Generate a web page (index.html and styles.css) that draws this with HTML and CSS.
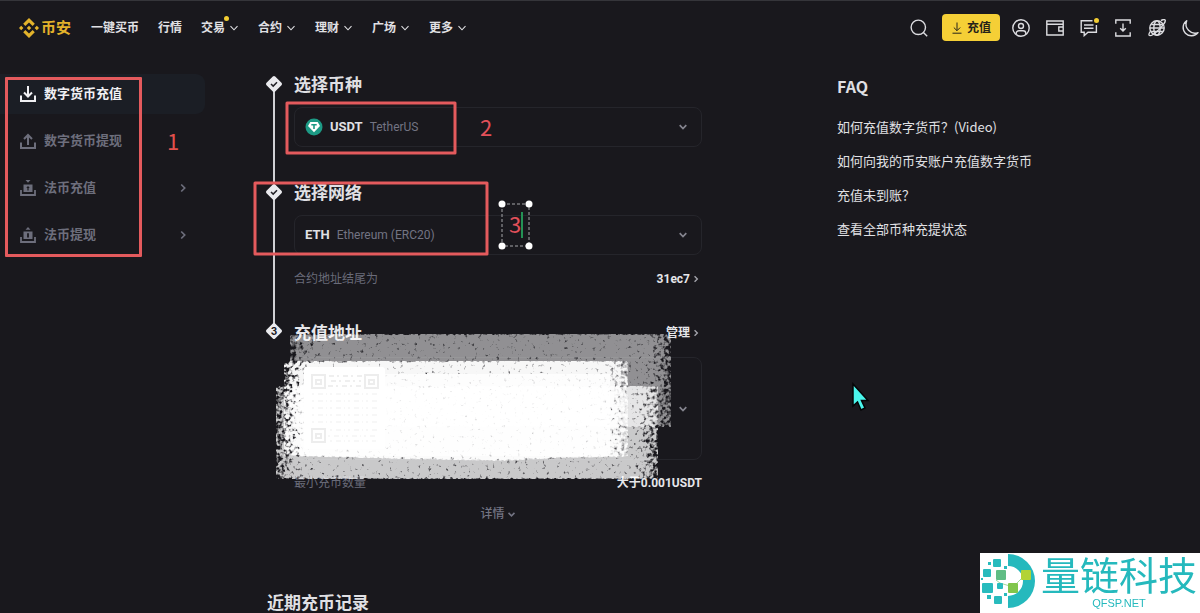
FILE: index.html
```html
<!DOCTYPE html>
<html lang="zh-CN">
<head>
<meta charset="utf-8">
<meta name="viewport" content="width=device-width, initial-scale=1">
<title>数字货币充值</title>
<link rel="stylesheet" href="styles.css">
</head>
<body>
<svg class="defs" aria-hidden="true">
  <symbol id="chev" viewBox="0 0 10 10"><path d="M1.5 3.2 5 6.8l3.500-3.600" fill="none" stroke="currentColor" stroke-width="1.100"/></symbol>
  <symbol id="chev-bold" viewBox="0 0 10 10"><path d="M1.700 3.200 5 6.500l3.300-3.300" fill="none" stroke="currentColor" stroke-width="1.700"/></symbol>
  <symbol id="chev-right" viewBox="0 0 10 10"><path d="M3.200 1.500 6.700 5 3.200 8.500" fill="none" stroke="currentColor" stroke-width="1.700"/></symbol>
  <symbol id="step-done" viewBox="0 0 18 24"><path d="M7.800 4.600a1.700 1.700 0 0 1 2.400 0l6.300 6.200a1.700 1.700 0 0 1 0 2.400l-6.300 6.200a1.700 1.700 0 0 1-2.400 0l-6.300-6.200a1.700 1.700 0 0 1 0-2.400z" transform="translate(0 -1)" fill="#eaeaee"/><path d="m6 11 2.200 2.100 3.800-3.800" fill="none" stroke="#222127" stroke-width="1.500"/></symbol>
</svg>

<header class="header">
  <a class="logo" href="#">
    <svg width="20" height="20" viewBox="0 0 20 20" fill="#e3b32b"><path d="M10 0 15.800 5.800 13.600 8 10 4.400 6.400 8 4.200 5.800zM2.200 7.800 4.400 10 2.200 12.200 0 10zM17.800 7.800 20 10l-2.200 2.200L15.600 10zM10 7.800 12.200 10 10 12.200 7.800 10zM10 20l-5.800-5.800L6.400 12l3.600 3.600 3.600-3.600 2.200 2.200z"/></svg>
    <span>币安</span>
  </a>
  <nav class="nav">
    <a href="#">一键买币</a>
    <a href="#">行情</a>
    <a href="#" class="has-dot">交易<svg><use href="#chev"/></svg></a>
    <a href="#">合约<svg><use href="#chev"/></svg></a>
    <a href="#">理财<svg><use href="#chev"/></svg></a>
    <a href="#">广场<svg><use href="#chev"/></svg></a>
    <a href="#">更多<svg><use href="#chev"/></svg></a>
  </nav>
  <button class="icon search" aria-label="搜索"><svg viewBox="0 0 18 18"><circle cx="8.300" cy="8.300" r="7.200"/><path d="m13.400 13.400 3.800 3.800"/></svg></button>
  <button class="deposit"><svg viewBox="0 0 12 12"><path d="M6 .5v8M2.800 5.500 6 8.700l3.200-3.200M1.500 11.200h9"/></svg>充值</button>
  <div class="tools">
    <button class="icon" aria-label="账户"><svg viewBox="0 0 18 18"><circle cx="9" cy="9" r="8.200"/><circle cx="9" cy="7" r="2.500"/><path d="M4.200 15.200v-.7a2.700 2.700 0 0 1 2.700-2.700h4.200a2.700 2.700 0 0 1 2.700 2.700v.7"/></svg></button>
    <button class="icon" aria-label="钱包"><svg viewBox="0 0 18 18"><path d="M17.200 5.200V2H.8v14h16.400v-3.200M.8 5.200h16.400v7.600M17.200 8h-4.400v4h4.400"/></svg></button>
    <button class="icon has-dot" aria-label="消息"><svg viewBox="0 0 18 18"><path d="M12.500 1.800H1.200v11.400h3v3.400l3.800-3.400h8.400V6M4 6h9.500M4 9.300h9.500"/></svg></button>
    <button class="icon" aria-label="下载"><svg viewBox="0 0 18 18"><path d="M1.800 4.800V1h14.400v3.800M1.800 13.200V17h14.400v-3.800M9 4.500v7.500M6.200 9.300 9 12.100l2.800-2.800"/></svg></button>
    <button class="icon" aria-label="语言"><svg viewBox="0 0 18 18"><circle cx="9" cy="9" r="7.200"/><ellipse cx="9" cy="9" rx="3.200" ry="7.200"/><path d="M2 9h14M3.200 5.500h11.600M3.200 12.500h11.600"/><path d="M13 1.500c2-1 3.600-1.200 4-.6 1 1.200-1.800 5.500-6 9.500s-8.500 7-9.800 5.900c-.6-.6-.1-2 .9-3.800"/></svg></button>
    <button class="icon" aria-label="深色模式"><svg viewBox="0 0 18 18"><path d="M4.700 1.700A8.300 8.300 0 1 0 16 13.600 9 9 0 0 1 4.700 1.700z" stroke-linejoin="round"/></svg></button>
  </div>
</header>

<main class="page">
  <aside class="sidebar">
    <a class="item active" href="#"><svg viewBox="0 0 16 16"><path d="M8 0v10M4 6.500l4 4 4-4M1 9.500V15h14V9.500" fill="none" stroke="currentColor" stroke-width="2"/></svg><span>数字货币充值</span></a>
    <a class="item" href="#"><svg viewBox="0 0 16 16"><path d="M8 12V2.500M4 6l4-4 4 4M1 9.500V15h14V9.500" fill="none" stroke="currentColor" stroke-width="2"/></svg><span>数字货币提现</span></a>
    <a class="item" href="#"><svg viewBox="0 0 16 16"><path d="M1 10v5h14v-5" fill="none" stroke="currentColor" stroke-width="1.800"/><path d="M5.500 0h5L8 2.800zM3.500 4.500h9V12h-9z" fill="currentColor"/><path d="M8 6.200v4.200M6.700 7.500h2.600" stroke="#19181d" stroke-width="1.200"/></svg><span>法币充值</span><svg class="more"><use href="#chev-right"/></svg></a>
    <a class="item" href="#"><svg viewBox="0 0 16 16"><path d="M1 10v5h14v-5" fill="none" stroke="currentColor" stroke-width="1.800"/><path d="M5.500 2.800h5L8 0zM3.500 4.500h9V12h-9z" fill="currentColor"/><path d="M8 6.200v4.200" stroke="#19181d" stroke-width="1.800"/></svg><span>法币提现</span><svg class="more"><use href="#chev-right"/></svg></a>
    <div class="mark mark-side"></div>
    <span class="mark-num">1</span>
  </aside>

  <section class="deposit-flow">
    <ol class="steps">
      <li class="step">
        <div class="rail"><svg><use href="#step-done"/></svg></div>
        <div class="body">
          <h2>选择币种</h2>
          <button class="picker" aria-haspopup="listbox">
            <svg class="coin" viewBox="0 0 18 18"><circle cx="9" cy="9" r="8.500" fill="#1d9a85"/><path d="M5.300 4h7.400L15 8l-6 6.200L3 8z" fill="#fff"/><path d="M6.300 6h5.400v1.500H9.800V11H8.200V7.500H6.300z" fill="#1d9a85"/></svg>
            <strong>USDT</strong><span>TetherUS</span><svg class="arrow"><use href="#chev-bold"/></svg>
          </button>
        </div>
      </li>
      <li class="step">
        <div class="rail"><svg><use href="#step-done"/></svg></div>
        <div class="body">
          <h2>选择网络</h2>
          <button class="picker" aria-haspopup="listbox"><strong>ETH</strong><span>Ethereum (ERC20)</span><svg class="arrow"><use href="#chev-bold"/></svg></button>
          <div class="row contract"><span>合约地址结尾为</span><a href="#">31ec7<svg><use href="#chev-right"/></svg></a></div>
        </div>
      </li>
      <li class="step">
        <div class="rail"><svg viewBox="0 0 18 24"><path d="M7.800 4.600a1.700 1.700 0 0 1 2.400 0l6.300 6.200a1.700 1.700 0 0 1 0 2.400l-6.300 6.200a1.700 1.700 0 0 1-2.400 0l-6.300-6.200a1.700 1.700 0 0 1 0-2.400z" transform="translate(0 -2)" fill="#eaeaee"/><text class="step-num" x="9" y="14" text-anchor="middle">3</text></svg></div>
        <div class="body">
          <div class="row head"><h2>充值地址</h2><a href="#">管理<svg><use href="#chev-right"/></svg></a></div>
          <div class="address"><svg class="arrow"><use href="#chev-bold"/></svg></div>
          <div class="row minimum"><span>最小充币数量</span><b>大于0.001USDT</b></div>
          <button class="details">详情<svg><use href="#chev-bold"/></svg></button>
        </div>
      </li>
    </ol>
    <h2 class="recent">近期充币记录</h2>

    <svg class="overlay" aria-hidden="true">
      <defs>
        <filter id="spray" x="0" y="0" width="1" height="1" color-interpolation-filters="sRGB">
          <feGaussianBlur in="SourceAlpha" stdDeviation="17 1" result="soft"/>
          <feTurbulence type="fractalNoise" baseFrequency="0.28" numOctaves="2" seed="7" result="noise"/>
          <feComposite in="soft" in2="noise" operator="arithmetic" k1="0" k2="0.700" k3="1" k4="-0.760" result="mix"/>
          <feColorMatrix in="mix" type="matrix" values="0 0 0 0 1  0 0 0 0 1  0 0 0 0 1  0 0 0 3.500 0" result="paint"/>
          <feComposite in="paint" in2="SourceAlpha" operator="in"/>
        </filter>
      </defs>
      <g transform="translate(-265 -73)">
        <g opacity=".52"><path filter="url(#spray)" d="M290 334H671V427H290z"/></g>
        <g opacity=".93"><path filter="url(#spray)" d="M284 361H628V457L560 458 500 461 400 459 284 456z"/></g>
        <g opacity=".77"><path filter="url(#spray)" d="M276 386H658V479H276z"/></g>
        <path d="M312 374H610V456H300V386z" fill="#fff" opacity=".7"/>
        <rect x="304" y="367" width="81" height="82" rx="3" fill="#fff"/>
        <g fill="none" stroke="#ededed" stroke-width="2">
          <path d="M312 375h13v13h-13zM365 375h13v13h-13zM312 429h13v13h-13zM316 380h5v4h-5zM369 380h5v4h-5zM316 434h5v4h-5z"/>
          <path d="M329 376h34M331 381h30M328 386h35" stroke-dasharray="5 3 2 4" stroke="#efefef"/>
          <path d="M312 394h66M312 401h66M312 408h66M312 415h66M312 422h66M330 430h48M328 436h50M330 441h46" stroke-dasharray="2 4 5 3 1 3" stroke="#f7f7f7"/>
        </g>
        <g fill="none" stroke="#e45a5d" stroke-width="3" stroke-linejoin="round">
          <path d="M287 103H455V153H287z"/>
          <path d="M255 183H487V254H255z"/>
        </g>
        <text class="num" x="480" y="136">2</text>
        <text class="num" x="509" y="233">3</text>
        <path d="M502 204H529V246H502z" fill="none" stroke="#a5a5a9" stroke-dasharray="3 2"/>
        <path d="M522 212V238" stroke="#249255" stroke-width="2"/>
        <g fill="#fff"><circle cx="502" cy="204" r="3.500"/><circle cx="529" cy="204" r="3.500"/><circle cx="502" cy="246" r="3.500"/><circle cx="529" cy="246" r="3.500"/></g>
      </g>
    </svg>
  </section>

  <section class="faq">
    <h2>FAQ</h2>
    <a href="#">如何充值数字货币？(Video)</a>
    <a href="#">如何向我的币安账户充值数字货币</a>
    <a href="#">充值未到账？</a>
    <a href="#">查看全部币种充提状态</a>
    <svg class="cursor" viewBox="0 0 20 30" aria-hidden="true"><path d="M2 2v22l4.500-4 3.500 8 4-2-3.500-7.500H17z" fill="#4af5ec" stroke="#050507" stroke-width="1.500"/></svg>
  </section>
</main>

<div class="watermark">
  <svg viewBox="0 0 56 60" aria-hidden="true">
    <path d="M28 1a27 27 0 0 1 0 54V43a15 15 0 0 0 0-30z" fill="#25b9bd"/>
    <path d="M16 27 20 30 33 34 46 21" fill="none" stroke="#9edc9b" stroke-width="1"/>
    <g fill="#28bbbd"><rect x="13" y="6" width="8" height="8" rx="1"/><rect x="3" y="16" width="8" height="8" rx="1"/><rect x="2" y="30" width="11" height="10" rx="1"/><rect x="17" y="30" width="6" height="6" rx="1"/><rect x="14" y="43" width="8" height="8" rx="1"/><rect x="7" y="42" width="4" height="4"/><rect x="8" y="9" width="3" height="3"/><rect x="24" y="13" width="3" height="3"/><rect x="1" y="25" width="2" height="2"/><rect x="24" y="40" width="3" height="3"/></g>
    <rect x="16" y="17" width="10" height="10" rx="1" fill="#60bd84"/><rect x="28" y="30" width="10" height="10" rx="1" fill="#80c64b"/><rect x="41" y="17" width="10" height="10" rx="1" fill="#b2d335"/>
  </svg>
  <div class="brand"><span>量链科技</span><small>QFSP.NET</small></div>
</div>
</body>
</html>
```

FILE: styles.css
```css
* { box-sizing: border-box; }
body {
  margin: 0;
  min-height: 100vh;
  background: #19181d;
  color: #e0e0e4;
  font: 500 12px/20px Roboto, "Noto Sans CJK SC", sans-serif;
  position: relative;
  overflow-x: hidden;
}
a { color: inherit; text-decoration: none; }
button { font: inherit; color: inherit; background: none; border: 0; padding: 0; cursor: pointer; }
h2, ol { margin: 0; padding: 0; }
h2 { font-size: 17px; line-height: 24px; font-weight: 600; }
.defs { position: absolute; width: 0; height: 0; }

.header {
  display: flex;
  align-items: center;
  height: 54px;
  padding-left: 19px;
  border-top: 1px solid #35353a;
}
.logo { display: flex; align-items: center; gap: 2px; color: #e3b32b; font-size: 15px; font-weight: 700; margin-right: 20px; }
.nav { display: flex; gap: 19px; margin-right: auto; font-weight: 600; }
.nav a { display: flex; align-items: center; gap: 4px; white-space: nowrap; }
.nav svg { width: 10px; height: 10px; }
.has-dot { position: relative; }
.has-dot::after { content: ""; position: absolute; width: 5px; height: 5px; border-radius: 50%; background: #f3cd32; }
.nav .has-dot::after { top: -2px; left: 23px; }
.icon.has-dot::after { top: -1px; right: -1px; }
.icon { width: 18px; height: 18px; }
.icon svg { display: block; width: 18px; height: 18px; fill: none; stroke: #dcdce0; stroke-width: 1.4; }
.search { margin-right: 14px; }
.deposit {
  display: flex;
  align-items: center;
  justify-content: center;
  gap: 4px;
  width: 58px;
  height: 27px;
  margin-right: 12px;
  border-radius: 4px;
  background: #f5cf36;
  color: #26231a;
  font-weight: 600;
}
.deposit svg { width: 12px; height: 12px; fill: none; stroke: currentColor; }
.tools { display: flex; gap: 16px; }

.page { display: grid; grid-template-columns: 205fr 497fr 498fr; }
.sidebar { position: relative; display: flex; flex-direction: column; gap: 7px; padding-top: 20px; }
.item {
  display: flex;
  align-items: center;
  gap: 8px;
  height: 40px;
  padding: 0 17px 0 20px;
  border-radius: 0 9px 9px 0;
  color: #6d6e7c;
  font-size: 13px;
  font-weight: 600;
}
.item svg { width: 16px; height: 16px; }
.item .more { width: 10px; height: 10px; margin-left: auto; }
.active { background: #1b1e25; color: #f0f0f3; }
.mark { position: absolute; border: 3px solid #e45a5d; border-radius: 1px; }
.mark-side { top: 23px; left: 5px; width: 137px; height: 180px; }
.mark-num { position: absolute; top: 76px; left: 167px; color: #e2504c; font: 400 22px/20px "Noto Sans CJK SC", sans-serif; }

.deposit-flow { position: relative; margin: 19px 0 0 60px; }
.steps { list-style: none; }
.step { display: grid; grid-template-columns: 18px 1fr; gap: 11px; }
.rail { position: relative; }
.rail svg { position: relative; display: block; width: 18px; height: 24px; }
.step:not(:last-child) .rail::before { content: ""; position: absolute; top: 12px; bottom: -12px; left: 8px; width: 2px; background: #d0d0d4; }
.step-num { font: 700 10px Inter, sans-serif; fill: #19181d; }
.body { padding-bottom: 34px; }
.step:nth-child(2) .body { padding-bottom: 32px; }
.step:last-child .body { padding-bottom: 0; }
.picker {
  display: flex;
  align-items: center;
  gap: 7px;
  width: 100%;
  height: 40px;
  margin-top: 10px;
  padding: 0 13px 0 10px;
  border: 1px solid #25252b;
  border-radius: 8px;
}
.picker strong { font-size: 13px; font-weight: 700; }
.picker span { color: #737483; font-weight: 400; }
.coin { width: 18px; height: 18px; }
.arrow { width: 10px; height: 10px; margin-left: auto; color: #85858f; }
.row { display: flex; justify-content: space-between; color: #696b79; }
.row a { display: flex; align-items: center; gap: 2px; padding-right: 2px; color: #e6e6ea; font-weight: 700; }
.row a svg { width: 8px; height: 8px; color: #a5a5ad; }
.row span { font-weight: 400; }
.contract { margin-top: 14px; }
.head h2 { color: #e6e6ea; }
.address {
  display: flex;
  align-items: center;
  height: 103px;
  margin-top: 12px;
  padding-right: 13px;
  border: 1px solid #25252b;
  border-radius: 8px;
}
.minimum { margin-top: 13px; }
.minimum b { color: #e6e6ea; font-weight: 700; }
.details { display: flex; align-items: center; gap: 2px; margin: 11px auto 0; color: #737483; }
.details svg { width: 9px; height: 9px; }
.recent { margin-top: 69px; padding-left: 2px; line-height: 20px; }
.overlay { position: absolute; top: 0; left: 0; width: 100%; height: 100%; overflow: visible; pointer-events: none; }
.num { font: 400 22px "Noto Sans CJK SC", sans-serif; fill: #e2505a; }

.faq { position: relative; display: flex; flex-direction: column; align-items: flex-start; gap: 14px; padding: 20px 0 0 135px; font: 400 13px/20px "Noto Sans CJK SC", sans-serif; }
.faq h2 { margin-bottom: 5px; font-size: 16px; font-weight: 700; }
.cursor { position: absolute; top: 328px; left: 149px; width: 20px; height: 30px; }

.watermark { position: fixed; right: 0; bottom: 0; display: flex; gap: 5px; width: 220px; height: 60px; background: #fff; color: #25b9bd; }
.watermark svg { width: 56px; height: 60px; flex: none; }
.brand { display: flex; flex-direction: column; align-items: center; white-space: nowrap; }
.brand span { font: 400 39px/40px "Noto Sans CJK SC", serif; }
.brand small { margin-top: 4px; font: 400 11px/12px "Liberation Sans", sans-serif; }
```
